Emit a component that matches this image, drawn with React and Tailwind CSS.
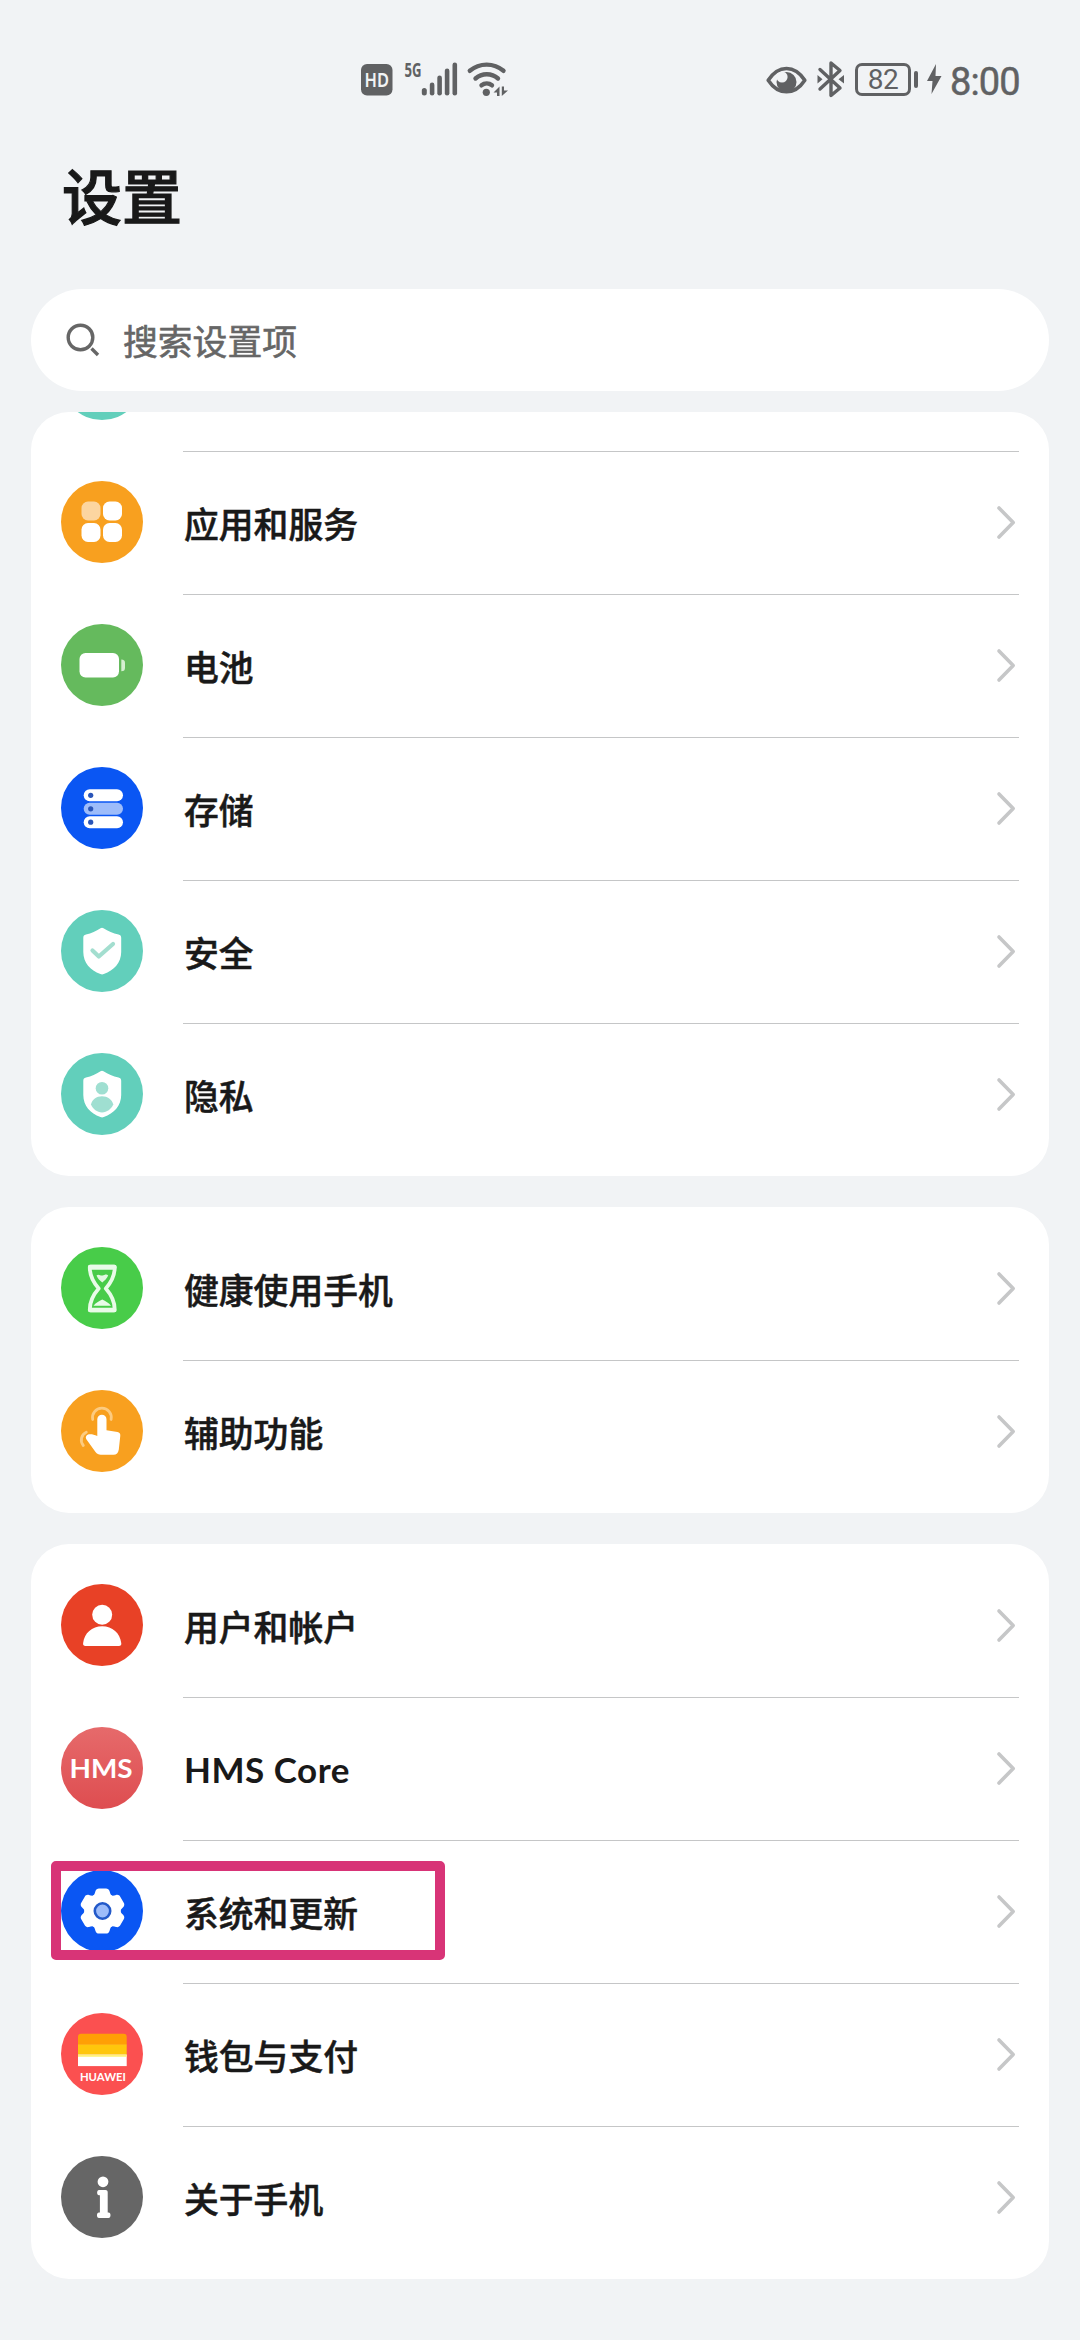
import React from 'react';

const SHIELD = 'M39.500 18.300 C40.500 17.600 41.500 17.600 42.500 18.300 C47 21.300 52 23.300 57.500 24.600 C59.300 25 60.200 26 60.200 27.800 V42 C60.200 52.500 53 60.500 42.800 64 C41.600 64.500 40.600 64.500 39.400 64 C29.300 60.500 22.300 52.500 22.300 42 V27.800 C22.300 26 23.200 25 25 24.600 C30.500 23.300 35 21.300 39.500 18.300 Z';

// All the round icons are drawn on an 82 x 82 canvas
const Round = ({ fill, children }) => (
  <svg className="w-[82px] h-[82px] shrink-0" viewBox="0 0 82 82">
    <circle cx="41" cy="41" r="41" fill={fill} />
    {children}
  </svg>
);

const ScrolledIcon = () => <Round fill="#62cfbb" />;

const AppsIcon = () => (
  <Round fill="#f8a01f">
    <rect x="20.5" y="20.5" width="19" height="19" rx="6.5" fill="#fcd5a0" />
    <rect x="42" y="20.5" width="19" height="19" rx="6.5" fill="#fff" />
    <rect x="20.5" y="42" width="19" height="19" rx="6.5" fill="#fff" />
    <rect x="42" y="42" width="19" height="19" rx="6.5" fill="#fff" />
  </Round>
);

const BatteryIcon = () => (
  <Round fill="#65ba5d">
    <rect x="18.5" y="29" width="39.5" height="24.5" rx="6" fill="#fff" />
    <path d="M60.3 35.5 C63 35.5 64 37 64 39 V44 C64 46 63 47.3 60.3 47.3 Z" fill="#d6efd2" />
  </Round>
);

const StorageIcon = () => (
  <Round fill="#0a56f3">
    <rect x="22.7" y="22.3" width="39.3" height="12" rx="6" fill="#fff" />
    <rect x="22.7" y="35.8" width="39.3" height="12" rx="6" fill="#9dbcfa" />
    <rect x="22.7" y="49.2" width="39.3" height="12" rx="6" fill="#fff" />
    <circle cx="29.7" cy="28.3" r="2.6" fill="#2a55b8" />
    <circle cx="29.7" cy="41.8" r="2.6" fill="#2a55b8" />
    <circle cx="29.7" cy="55.2" r="2.6" fill="#2a55b8" />
  </Round>
);

const SecurityIcon = () => (
  <Round fill="#62cfbb">
    <path d={SHIELD} fill="#fff" />
    <path d="M31.500 40.500 L37.800 46.500 L52 34" fill="none" stroke="#a3decf" strokeWidth="4.200" strokeLinecap="round" strokeLinejoin="round" />
  </Round>
);

const PrivacyIcon = () => (
  <Round fill="#62cfbb">
    <path d={SHIELD} fill="#fff" />
    <circle cx="41" cy="35.3" r="6.3" fill="#9fdfd1" />
    <path d="M30 51.500 C31 46.500 35.500 43.300 41 43.300 C46.500 43.300 51 46.500 52.300 51.500 C50 56.500 46 59 41 59.500 C36 59 32 56.500 30 51.500 Z" fill="#9fdfd1" />
  </Round>
);

const HourglassIcon = () => (
  <Round fill="#48cc49">
    <path
      d="M28.800 19.700 H53.700 C54 29 50.500 35 44.800 41.500 C50.500 48 54 54 53.700 63.300 H28.800 C28.500 54 32 48 37.700 41.500 C32 35 28.500 29 28.800 19.700 Z"
      fill="none" stroke="#e9fbe8" strokeWidth="3.800" strokeLinejoin="round"
    />
    <path d="M29.500 20.300 H53" stroke="#e9fbe8" strokeWidth="5" strokeLinecap="round" />
    <path d="M29.500 63 H53" stroke="#e9fbe8" strokeWidth="4.500" strokeLinecap="round" />
    <path d="M35.500 28.500 C37.500 26.500 39.500 29 41.500 28.500 C43.500 28 45.500 26.500 47.200 28.500 C46 31.500 43.500 33.500 41.300 35.500 C39 33.500 36.500 31.500 35.500 28.500 Z" fill="#e0f8df" />
    <path d="M32.500 58.800 C34.500 55.500 38 54.500 41.300 52.500 C44.500 54.500 48 55.500 50 58.800 Z" fill="#e9fbe8" />
  </Round>
);

const TouchIcon = () => (
  <Round fill="#f8a01f">
    <path d="M31.700 29.500 A9.400 9.400 0 1 1 50.100 29.500" fill="none" stroke="#fccb80" strokeWidth="2.800" strokeLinecap="round" />
    <path d="M25.300 42.300 A8.500 8.500 0 0 0 22.300 55.500" fill="none" stroke="#fccb80" strokeWidth="2.800" strokeLinecap="round" />
    <path d="M36.300 29.300 A4.600 4.600 0 0 1 45.500 29.300 V40.300 L56.500 42 C58.500 42.400 59.500 43.700 59.300 45.700 L57.800 59.500 C57.300 63 55.500 64.700 52.500 64.700 H39.800 C37.500 64.700 36 64 34.500 62 L25.500 49.500 C24 47.300 25.300 44.800 28 44.300 C30.500 43.900 33 44.600 36.300 46 Z" fill="#fff" />
  </Round>
);

const UserIcon = () => (
  <Round fill="#e84126">
    <circle cx="41.200" cy="30.700" r="10" fill="#fff" />
    <path d="M24.500 62 C22.700 62 21.900 61 22.100 59.300 C23.300 49 31 42.300 41.200 42.300 C51.400 42.300 59.100 49 60.300 59.300 C60.500 61 59.700 62 57.900 62 Z" fill="#fff" />
  </Round>
);

const HmsIcon = () => (
  <Round fill="url(#hms)">
    <defs>
      <linearGradient id="hms" x1="0" y1="0" x2="0" y2="1">
        <stop offset="0" stopColor="#e66a6b" />
        <stop offset="1" stopColor="#de4d50" />
      </linearGradient>
    </defs>
    <text x="8.500" y="51" textLength="63" lengthAdjust="spacingAndGlyphs" className="font-['Lato',sans-serif] text-[26px] font-bold" fill="#fff">HMS</text>
  </Round>
);

const GearIcon = () => (
  <Round fill="#0a56f3">
    <g fill="#fff">
      <circle cx="41.500" cy="41" r="18" />
      {[0, 60, 120, 180, 240, 300].map((deg) => (
        <path
          key={deg}
          d="M31 26.500 C33.500 25.300 33.800 23.500 34.400 21.300 C35 19.300 36.300 18.500 38 18.500 H45 C46.700 18.500 48 19.300 48.600 21.300 C49.200 23.500 49.500 25.300 52 26.500 L46 34 H37 Z"
          transform={`rotate(${deg} 41.5 41)`}
        />
      ))}
    </g>
    <circle cx="41.500" cy="41" r="7.700" fill="#9dbcfa" stroke="#2359c9" strokeWidth="2.600" />
  </Round>
);

const WalletIcon = () => (
  <Round fill="#fb5050">
    <path d="M17 23.700 C17 21.700 18 20.700 20 20.700 H62.700 C64.700 20.700 65.700 21.700 65.700 23.700 V31.500 H17 Z" fill="#ff9f05" />
    <rect x="17" y="31.300" width="48.700" height="10.500" fill="#ffc60c" />
    <rect x="17" y="41.600" width="48.700" height="11.500" fill="#fff" />
    <rect x="17" y="41.600" width="48.700" height="2.200" fill="#fff27a" />
    <text x="18.900" y="67.700" textLength="46" lengthAdjust="spacingAndGlyphs" className="font-['Lato',sans-serif] text-[10.500px] font-bold" fill="#fff">HUAWEI</text>
  </Round>
);

const AboutIcon = () => (
  <Round fill="#666666">
    <circle cx="42" cy="25.800" r="5.400" fill="#fff" />
    <path d="M38 34 H44.500 C45.800 34 46.700 34.900 46.700 36.200 V56.500 H47.500 C50.200 56.500 50.200 62 47.500 62 H38 C35.300 62 35.300 56.500 38 56.500 H38.900 V39.300 H38 C35.500 39.300 35.500 34 38 34 Z" fill="#fff" />
  </Round>
);

const deviceItems = [
  { label: '应用和服务', icon: AppsIcon },
  { label: '电池', icon: BatteryIcon },
  { label: '存储', icon: StorageIcon },
  { label: '安全', icon: SecurityIcon },
  { label: '隐私', icon: PrivacyIcon },
];

const usageItems = [
  { label: '健康使用手机', icon: HourglassIcon },
  { label: '辅助功能', icon: TouchIcon },
];

const systemItems = [
  { label: '用户和帐户', icon: UserIcon },
  { label: 'HMS Core', icon: HmsIcon, latin: true },
  { label: '系统和更新', icon: GearIcon, highlighted: true },
  { label: '钱包与支付', icon: WalletIcon },
  { label: '关于手机', icon: AboutIcon },
];

const Row = ({ item, last }) => {
  const Icon = item.icon;
  return (
    <div className="relative flex pl-[30px] pr-[30px]">
      <div className="flex items-center w-[122px] h-[142px] pb-0.5">
        <Icon />
      </div>
      <div className={`flex flex-1 items-center justify-between pr-[3px] ${last ? 'h-[142px]' : 'h-[143px] border-b border-[#c5c6c7]'}`}>
        <span
          className={`pl-px pt-px leading-none text-[#191919] ${
            item.latin
              ? "text-[35px] font-bold tracking-[0.500px] font-['Lato',sans-serif]"
              : "text-[34.800px] font-medium [-webkit-text-stroke:0.5px_#191919] font-['Noto_Sans_CJK_SC',sans-serif]"
          }`}
        >
          {item.label}
        </span>
        <svg className="w-[20px] h-[36px]" viewBox="0 0 20 36" fill="none">
          <path d="M3 3 L17.200 17.500 L3 32" stroke="#c6c7c8" strokeWidth="3.600" strokeLinecap="round" strokeLinejoin="round" />
        </svg>
      </div>
      {item.highlighted && (
        <div className="absolute left-[20px] top-[20px] w-[394px] h-[99px] border-[10px] border-[#d83477] rounded-[5px]"></div>
      )}
    </div>
  );
};

const Card = ({ items }) => (
  <div className="bg-white rounded-[38px] pt-[11px] pb-[10px]">
    {items.map((item, i) => (
      <Row key={item.label} item={item} last={i === items.length - 1} />
    ))}
  </div>
);

const StatusBar = () => (
  <div className="flex items-center justify-between h-[158px] pl-[361px] pr-[60px] text-[#606163]">
    <svg className="w-[150px] h-[56px]" viewBox="0 -10 150 56" fill="currentColor">
      <rect x="0" y="3" width="31.500" height="31.500" rx="6" />
      <text x="3.600" y="26" textLength="24.500" lengthAdjust="spacingAndGlyphs" className="font-['Noto_Sans',sans-serif] text-[19.500px] font-semibold" fill="#f1f3f5">HD</text>
      <text x="43.500" y="15.500" textLength="17" lengthAdjust="spacingAndGlyphs" className="font-['Noto_Sans',sans-serif] text-[20px] font-bold">5G</text>
      <rect x="60.800" y="27" width="5" height="7.500" rx="2.500" />
      <rect x="68.800" y="21.500" width="4.600" height="13" rx="2.300" />
      <rect x="76.300" y="14.500" width="4.600" height="20" rx="2.300" />
      <rect x="83.800" y="7.500" width="4.600" height="27" rx="2.300" />
      <rect x="91.500" y="1.500" width="4.600" height="33" rx="2.300" />
      <g fill="none" stroke="currentColor" strokeWidth="4.400" strokeLinecap="round">
        <path d="M108.800 9.800 A26 26 0 0 1 142.500 9.800" />
        <path d="M114.500 17.500 A17 17 0 0 1 137 17.500" />
        <path d="M120.500 24.300 A8.500 8.500 0 0 1 131 24.300" />
      </g>
      <circle cx="125.300" cy="31.300" r="3.600" />
      <path d="M132.500 31.500 L138.500 25.500 V35 H136 V31.500 Z M147 29.500 L140.800 35 V25.500 H143 V29.500 Z" />
    </svg>
    <div className="flex items-center">
      <svg className="w-[41px] h-[36px]" viewBox="0 0 41 36" fill="none">
        <path d="M2.200 19.200 C7 12 13 7.500 20.500 7.500 C28 7.500 34 12 38.800 19.200 C34 26.500 28 30.800 20.500 30.800 C13 30.800 7 26.500 2.200 19.200 Z" stroke="currentColor" strokeWidth="3.600" strokeLinejoin="round" />
        <circle cx="20.500" cy="21" r="10" fill="currentColor" />
        <circle cx="16" cy="16" r="5.600" fill="#f1f3f5" />
      </svg>
      <svg className="w-[28px] h-[38px] ml-[10px]" viewBox="0 -1 28 38" fill="none">
        <path d="M3 8.500 L23 27 L14 34.500 V2 L23 9.500 L3 28" stroke="currentColor" strokeWidth="3.400" strokeLinecap="round" strokeLinejoin="round" />
        <path d="M0.500 14 L5.500 18.300 L0.500 22.500 Z M27 14 L21.500 18.300 L27 22.500 Z" fill="currentColor" />
      </svg>
      <div className="flex items-center ml-[10px]">
        <div className="flex items-center justify-center w-[56px] h-[33px] pt-px border-[3px] border-current rounded-[7px] font-['Roboto',sans-serif] text-[28px] leading-none tracking-[-0.600px]">
          82
        </div>
        <div className="w-[4px] h-[17px] ml-[3px] rounded-full bg-current"></div>
      </div>
      <svg className="w-[16px] h-[32px] ml-[8px]" viewBox="0 0 16 32" fill="currentColor">
        <path d="M10 1 L1 18 H6.500 L5.500 31 L15.500 13 H9.500 Z" />
      </svg>
      <span className="w-[70px] ml-[8px] pt-[5px] whitespace-nowrap font-['Roboto',sans-serif] text-[38px] leading-none tracking-[-0.900px] [-webkit-text-stroke:0.5px_#606163]">8:00</span>
    </div>
  </div>
);

const App = () => {
  return (
    <div className="w-[1080px] h-[2340px] overflow-hidden bg-[#f1f3f5] font-['Noto_Sans_CJK_SC',sans-serif]">
      <StatusBar />

      <div className="flex items-center h-[80px] pl-[62px] pb-[8px]">
        <h1 className="text-[60px] leading-none font-medium text-[#191919] [-webkit-text-stroke:1.2px_#191919]">设置</h1>
      </div>

      <div className="flex items-center h-[102px] mt-[51px] mx-[31px] pl-[34px] bg-white rounded-full text-[#666666]">
        <svg className="w-[36px] h-[36px]" viewBox="0 0 36 36" fill="none" stroke="currentColor" strokeWidth="3.400">
          <circle cx="15.500" cy="15.500" r="12.300" />
          <path d="M26.500 26.500 L33 33" />
        </svg>
        <span className="ml-[22px] text-[34.800px] leading-none [-webkit-text-stroke:0.6px_#666666]">搜索设置项</span>
      </div>

      <div className="flex flex-col gap-[31px] mt-[21px] mx-[31px]">
        <div className="bg-white rounded-[38px] pb-[10px] overflow-hidden">
          {/* scrolled row, only its lower edge is visible */}
          <div className="-mt-[103px]">
            <Row item={{ label: '', icon: ScrolledIcon }} />
          </div>
          {deviceItems.map((item, i) => (
            <Row key={item.label} item={item} last={i === deviceItems.length - 1} />
          ))}
        </div>
        <Card items={usageItems} />
        <Card items={systemItems} />
      </div>
    </div>
  );
};

export default App;
